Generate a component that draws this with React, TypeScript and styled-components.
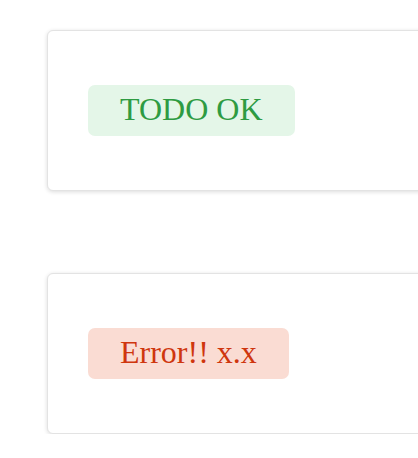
import React from "react";
import styled, { createGlobalStyle } from "styled-components";

const Global = createGlobalStyle`
  html, body { margin: 0; padding: 0; background: #ffffff; overflow: hidden; }
  body { font-family: "Liberation Serif", "Times New Roman", serif; }
`;

const Page = styled.div`
  display: flex;
  flex-direction: column;
  gap: 82px;
  padding: 30px 0 0 47px;
`;

const Card = styled.div`
  width: 420px;
  height: 161px;
  box-sizing: border-box;
  background: #ffffff;
  border: 1px solid #e3e3e3;
  border-radius: 6px;
  box-shadow: 0 1px 4px rgba(0, 0, 0, 0.14);
  padding: 54px 40px;
  display: flex;
  align-items: flex-start;
`;

const Badge = styled.span<{ $tone: "ok" | "error" }>`
  display: inline-block;
  font-size: 32px;
  line-height: 37px;
  padding: 6px 32px 8px;
  border-radius: 7px;
  color: ${(p) => (p.$tone === "ok" ? "#2e9b42" : "#cf360e")};
  background: ${(p) => (p.$tone === "ok" ? "#e4f6e8" : "#fadcd3")};
`;

export default function App() {
  return (
    <>
      <Global />
      <Page>
        <Card>
          <Badge $tone="ok">TODO OK</Badge>
        </Card>
        <Card>
          <Badge $tone="error">Error!! x.x</Badge>
        </Card>
      </Page>
    </>
  );
}
